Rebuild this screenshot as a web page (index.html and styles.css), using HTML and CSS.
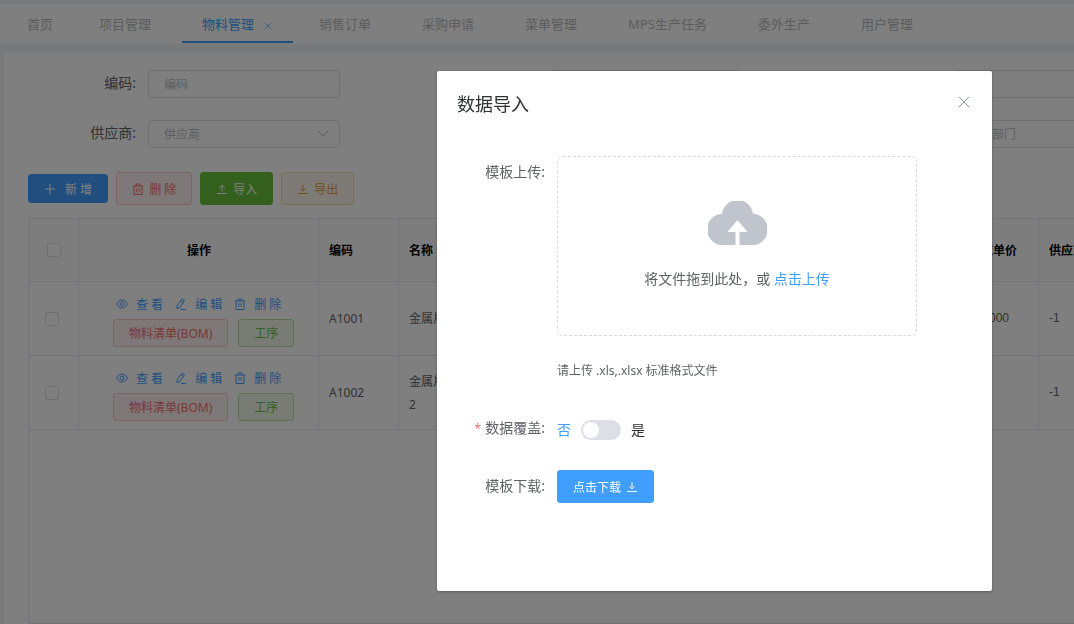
FILE: index.html
```html
<!DOCTYPE html>
<html lang="zh-CN">
  <head>
    <meta charset="UTF-8" />
    <meta name="viewport" content="width=device-width, initial-scale=1" />
    <title>物料管理</title>
    <link rel="stylesheet" href="styles.css">
  </head>
  <body>
    <svg class="sprite" aria-hidden="true">
      <symbol id="i-close" viewBox="0 0 12 12"><path d="M1 1l10 10M11 1L1 11" /></symbol>
      <symbol id="i-down" viewBox="0 0 12 12"><path d="M1 3l5 5 5-5" /></symbol>
      <symbol id="i-plus" viewBox="0 0 12 12"><path d="M6 1v10M1 6h10" /></symbol>
      <symbol id="i-trash" viewBox="0 0 12 12"><path d="M1 3h10M4 3V1h4v2M2 3v8.500h8V3M4.800 5.200v4M7.200 5.200v4" /></symbol>
      <symbol id="i-upload" viewBox="0 0 12 12"><path d="M1 10.500h10M6 8.500V2M3 5l3-3 3 3" /></symbol>
      <symbol id="i-download" viewBox="0 0 12 12"><path d="M1 10.500h10M6 1.500V8M3 5l3 3 3-3" /></symbol>
      <symbol id="i-eye" viewBox="0 0 12 12"><path d="M.5 6C2 3.200 4 2 6 2s4 1.200 5.500 4C10 8.800 8 10 6 10S2 8.800.5 6z" /><circle cx="6" cy="6" r="2" /></symbol>
      <symbol id="i-edit" viewBox="0 0 12 12"><path d="M2 8L7 1l2.500 1.800-5 7L2 10.800zM5.800 2.700l2.500 1.800M6 11.500h5" /></symbol>
    </svg>

    <div class="page">
      <nav class="tabs">
        <a class="tab" href="#">首页</a>
        <a class="tab closable" href="#">项目管理</a>
        <a class="tab closable active" href="#">物料管理<svg class="icon tab-close"><use href="#i-close" /></svg></a>
        <a class="tab closable" href="#">销售订单</a>
        <a class="tab closable" href="#">采购申请</a>
        <a class="tab closable" href="#">菜单管理</a>
        <a class="tab closable" href="#">MPS生产任务</a>
        <a class="tab closable" href="#">委外生产</a>
        <a class="tab closable" href="#">用户管理</a>
      </nav>

      <main class="card">
        <form class="search">
          <div class="field">
            <label for="code">编码:</label>
            <input id="code" type="text" placeholder="编码" />
          </div>
          <div class="field">
            <label for="name">名称:</label>
            <input id="name" type="text" placeholder="名称" />
          </div>
          <div class="field">
            <label for="spec">规格:</label>
            <input id="spec" type="text" placeholder="规格" />
          </div>
          <div class="field">
            <label for="supplier">供应商:</label>
            <div class="select">
              <select id="supplier"><option>供应商</option></select>
              <svg class="icon"><use href="#i-down" /></svg>
            </div>
          </div>
          <div class="field">
            <label for="type">类型:</label>
            <input id="type" type="text" placeholder="类型" />
          </div>
          <div class="field">
            <label for="dept">部门:</label>
            <input id="dept" type="text" placeholder="所属部门" />
          </div>
        </form>

        <div class="toolbar">
          <button class="btn primary short" type="button"><svg class="icon"><use href="#i-plus" /></svg>新 增</button>
          <button class="btn danger-plain" type="button"><svg class="icon"><use href="#i-trash" /></svg>删 除</button>
          <button class="btn success" type="button"><svg class="icon"><use href="#i-upload" /></svg>导入</button>
          <button class="btn warning-plain" type="button"><svg class="icon"><use href="#i-download" /></svg>导出</button>
        </div>

        <div class="table-wrap">
          <table>
            <colgroup>
              <col class="col-check" />
              <col class="col-action" />
              <col class="col-data" />
              <col class="col-data" />
              <col class="col-wide" />
              <col class="col-data" />
              <col class="col-data" />
            </colgroup>
            <thead>
              <tr>
                <th class="check"><input type="checkbox" aria-label="全选" /></th>
                <th class="center">操作</th>
                <th>编码</th>
                <th>名称</th>
                <th>规格</th>
                <th>供应单价</th>
                <th>供应商</th>
              </tr>
            </thead>
            <tbody>
              <tr>
                <td class="check"><input type="checkbox" aria-label="A1001" /></td>
                <td class="actions">
                  <div class="links">
                    <a href="#"><svg class="icon"><use href="#i-eye" /></svg>查 看</a>
                    <a href="#"><svg class="icon"><use href="#i-edit" /></svg>编 辑</a>
                    <a href="#"><svg class="icon"><use href="#i-trash" /></svg>删 除</a>
                  </div>
                  <div class="row-btns">
                    <button class="btn small danger-plain" type="button">物料清单(BOM)</button>
                    <button class="btn small success-plain" type="button">工序</button>
                  </div>
                </td>
                <td>A1001</td>
                <td>金属片</td>
                <td></td>
                <td class="num">100000</td>
                <td class="num">-1</td>
              </tr>
              <tr>
                <td class="check"><input type="checkbox" aria-label="A1002" /></td>
                <td class="actions">
                  <div class="links">
                    <a href="#"><svg class="icon"><use href="#i-eye" /></svg>查 看</a>
                    <a href="#"><svg class="icon"><use href="#i-edit" /></svg>编 辑</a>
                    <a href="#"><svg class="icon"><use href="#i-trash" /></svg>删 除</a>
                  </div>
                  <div class="row-btns">
                    <button class="btn small danger-plain" type="button">物料清单(BOM)</button>
                    <button class="btn small success-plain" type="button">工序</button>
                  </div>
                </td>
                <td>A1002</td>
                <td>金属片材料 2</td>
                <td></td>
                <td></td>
                <td class="num">-1</td>
              </tr>
            </tbody>
          </table>
        </div>
      </main>
    </div>

    <div class="overlay">
      <section class="dialog" role="dialog" aria-modal="true" aria-labelledby="dialog-title">
        <header class="dialog-header">
          <h2 id="dialog-title">数据导入</h2>
          <button class="dialog-close" type="button" aria-label="关闭"><svg class="icon"><use href="#i-close" /></svg></button>
        </header>
        <form class="dialog-body">
          <div class="item">
            <span class="item-label">模板上传:</span>
            <div class="item-content">
              <div class="dragger">
                <svg class="cloud" viewBox="0 0 59 44">
                  <path fill="#c0c4cc" d="M15.500 44A15.600 15.600 0 0 1 14 12.800A15.600 15.600 0 0 1 45 12.800A15.600 15.600 0 0 1 43.500 44H31.500V31H39.500L29.500 19L19.500 31H27.500V44z" />
                </svg>
                <p>将文件拖到此处，或 <a href="#">点击上传</a></p>
              </div>
              <p class="tip">请上传 .xls,.xlsx 标准格式文件</p>
            </div>
          </div>
          <div class="item">
            <label class="item-label required" for="cover">数据覆盖:</label>
            <div class="item-content switch-row">
              <span class="on">否</span>
              <input id="cover" class="switch" type="checkbox" role="switch" />
              <span>是</span>
            </div>
          </div>
          <div class="item">
            <span class="item-label">模板下载:</span>
            <div class="item-content">
              <button class="btn primary" type="button">点击下载<svg class="icon"><use href="#i-download" /></svg></button>
            </div>
          </div>
        </form>
      </section>
    </div>
  </body>
</html>
```

FILE: styles.css
```css
:root {
  --primary: #409eff;
  --success: #67c23a;
  --warning: #e6a23c;
  --danger: #f56c6c;
  --text: #303133;
  --text-regular: #606266;
  --placeholder: #b8bcc4;
  --border: #dcdfe6;
  --border-light: #e6e9f0;
  --bg: #f0f2f5;
}
* {
  box-sizing: border-box;
  margin: 0;
  padding: 0;
}
body {
  background: var(--bg);
  color: var(--text-regular);
  font-family: 'Noto Sans', 'Noto Sans CJK SC', sans-serif;
  font-size: 12px;
  overflow: hidden;
}
button,
input,
select {
  font: inherit;
}
a {
  color: var(--primary);
  text-decoration: none;
}
.sprite {
  display: none;
}
.icon {
  width: 12px;
  height: 12px;
  flex: none;
  fill: none;
  stroke: currentColor;
}
.page {
  display: flex;
  flex-direction: column;
  height: 100vh;
  padding-top: 3px;
}

/* tabs */
.tabs {
  display: flex;
  gap: 6px;
  height: 40px;
  padding-left: 7px;
  background: #fff;
  border-top: 1px solid var(--border-light);
  flex: none;
}
.tab {
  display: flex;
  align-items: center;
  padding: 0 20px;
  color: #b8b8b8;
  font-size: 13px;
  white-space: nowrap;
}
.tab.closable {
  padding-right: 25px;
}
.tab.active {
  padding-right: 20px;
  color: var(--primary);
  border-bottom: 2px solid var(--primary);
  padding-top: 2px;
}
.tab-close {
  width: 8px;
  height: 8px;
  margin: 4px 1px 0 10px;
}

/* search form */
.card {
  display: flex;
  flex-direction: column;
  flex: 1;
  min-height: 0;
  margin: 10px 0 0 4px;
  padding: 17px 0 0 24px;
  background: #fff;
  border-radius: 4px 0 0 0;
  overflow: hidden;
}
.search {
  display: grid;
  grid-template-columns: repeat(3, 312px);
  gap: 22px 90px;
  margin-bottom: 24px;
}
.field {
  display: grid;
  grid-template-columns: 108px 1fr;
  gap: 12px;
  align-items: center;
}
.field label {
  font-size: 14px;
  line-height: 26px;
  height: 28px;
  text-align: right;
}
.field input,
.field select {
  width: 100%;
  height: 28px;
  padding: 0 15px;
  background: #fff;
  border: 1px solid var(--border);
  border-radius: 4px;
  color: var(--placeholder);
  appearance: none;
}
.field input::placeholder {
  color: var(--placeholder);
}
.select {
  display: grid;
  align-items: center;
}
.select > * {
  grid-area: 1 / 1;
}
.select .icon {
  justify-self: end;
  margin-right: 11px;
  color: var(--placeholder);
  pointer-events: none;
}

/* buttons */
.btn {
  display: inline-flex;
  align-items: center;
  justify-content: center;
  gap: 5px;
  height: 33px;
  padding: 0 15px;
  border: 1px solid;
  border-radius: 3px;
  cursor: pointer;
  white-space: nowrap;
}
.btn.small {
  height: 28px;
}
.primary {
  background: var(--primary);
  border-color: var(--primary);
  color: #fff;
}
.btn.short {
  height: 29px;
  gap: 9px;
}
.success {
  background: var(--success);
  border-color: var(--success);
  color: #fff;
}
.danger-plain {
  background: #fef0f0;
  border-color: #fbc4c4;
  color: var(--danger);
}
.success-plain {
  background: #f0f9eb;
  border-color: #b3e19d;
  color: var(--success);
}
.warning-plain {
  background: #fdf6ec;
  border-color: #f5dab1;
  color: var(--warning);
}
.toolbar {
  display: flex;
  align-items: center;
  gap: 8px;
  margin-bottom: 13px;
}

/* table */
.table-wrap {
  flex: 1;
  min-height: 0;
  border: 1px solid var(--border-light);
  border-right: 0;
  overflow: hidden;
}
table {
  width: 1090px;
  table-layout: fixed;
  border-collapse: separate;
  border-spacing: 0;
}
.col-check {
  width: 50px;
}
.col-action {
  width: 240px;
}
.col-data {
  width: 80px;
}
.col-wide {
  width: 480px;
}
th,
td {
  padding: 0 9px 0 10px;
  border-right: 1px solid var(--border-light);
  border-bottom: 1px solid var(--border-light);
  line-height: 23px;
  text-align: left;
}
th {
  height: 63px;
  background: #fafafa;
  color: #000;
  white-space: nowrap;
}
td {
  height: 74px;
}
th.center {
  text-align: center;
}
.num {
  font-family: 'Liberation Sans', sans-serif;
}
td.check {
  padding: 0 4px 0 0;
}
th.check {
  padding: 0;
}
.check input {
  display: block;
  width: 14px;
  height: 14px;
  margin: 0 auto;
  border: 1px solid var(--border);
  border-radius: 2px;
  background: #fff;
  appearance: none;
}
td.actions {
  padding: 0 0 0 34px;
}
.links {
  display: flex;
  align-items: center;
  gap: 12px;
  height: 28px;
  padding-left: 3px;
  margin-bottom: 1px;
}
.links a {
  display: flex;
  align-items: center;
  gap: 8px;
}
.row-btns {
  display: flex;
  gap: 10px;
}

/* import dialog */
.overlay {
  position: fixed;
  inset: 0;
  display: flex;
  align-items: flex-start;
  justify-content: flex-end;
  padding: 71px 82px 33px;
  background: rgba(0, 0, 0, 0.5);
}
.dialog {
  width: 100%;
  max-width: 555px;
  padding: 20px 20px 88px;
  background: #fff;
  border-radius: 2px;
  box-shadow: 0 1px 3px rgba(0, 0, 0, 0.3);
}
.dialog-header {
  display: flex;
  align-items: center;
  justify-content: space-between;
  height: 24px;
}
.dialog-header h2 {
  color: var(--text);
  font-size: 18px;
  font-weight: 400;
}
.dialog-close {
  display: flex;
  padding: 2px;
  margin-bottom: 2px;
  border: 0;
  background: none;
  color: #909399;
  cursor: pointer;
}
.dialog-body {
  display: flex;
  flex-direction: column;
  gap: 26px;
  padding-top: 41px;
}
.item {
  display: flex;
  gap: 12px;
}
.item-label {
  width: 88px;
  height: 32px;
  font-size: 14px;
  line-height: 32px;
  text-align: right;
  flex: none;
}
.required::before {
  content: '*';
  margin-right: 4px;
  color: var(--danger);
  font-size: 12px;
}
.item-content {
  flex: 1;
  max-width: 360px;
}
.dragger {
  display: flex;
  flex-direction: column;
  align-items: center;
  height: 180px;
  padding-top: 44px;
  border: 1px dashed #d9d9d9;
  border-radius: 6px;
  font-size: 14px;
}
.cloud {
  width: 59px;
  height: 44px;
  margin-bottom: 23px;
}
.dragger p {
  line-height: 22px;
}
.tip {
  margin-top: 20px;
  line-height: 30px;
}
.switch-row {
  display: flex;
  align-items: center;
  gap: 10px;
  padding-top: 4px;
  color: var(--text);
  font-size: 14px;
  line-height: 20px;
}
.switch-row .on {
  color: var(--primary);
}
.switch {
  display: flex;
  align-items: center;
  width: 40px;
  height: 20px;
  padding: 2px;
  border-radius: 10px;
  background: var(--border);
  appearance: none;
  cursor: pointer;
}
.switch::before {
  content: '';
  width: 16px;
  height: 16px;
  border-radius: 50%;
  background: #fff;
}
.switch:checked {
  justify-content: flex-end;
  background: var(--primary);
}
```
